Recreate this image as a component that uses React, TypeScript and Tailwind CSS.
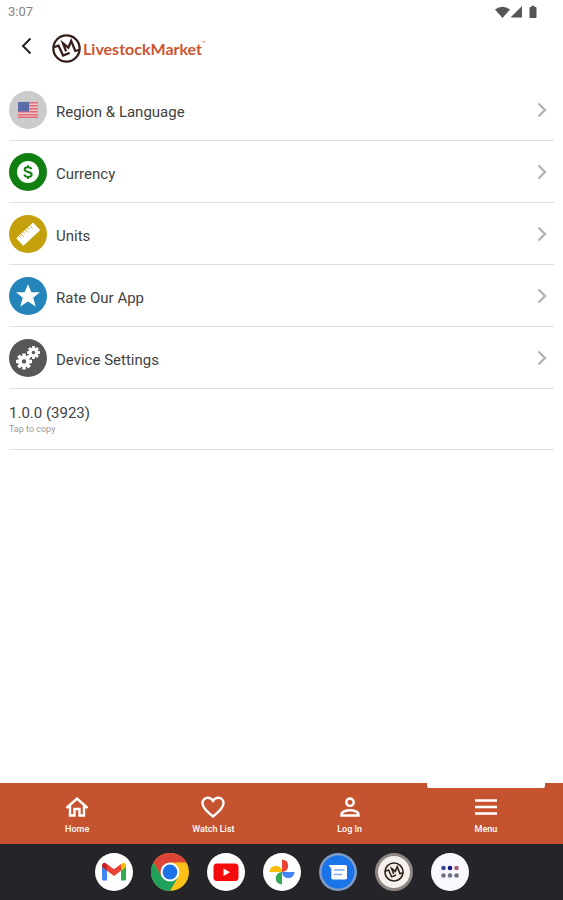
import type { ReactNode } from 'react';

interface SettingsRow {
  id: string;
  label: string;
  color: string;
  icon: ReactNode;
}

interface DockApp {
  id: string;
  label: string;
  icon: ReactNode;
}

function FlagIcon() {
  return (
    <svg viewBox="0 0 38 38" className="size-full" aria-hidden="true">
      <rect x="9" y="11" width="20" height="16" fill="#efc4c8" />
      {[11, 14, 17, 20, 23, 25.5].map((y) => (
        <rect key={y} x="9" y={y} width="20" height="1.5" fill="#de6d78" />
      ))}
      <rect x="9" y="11" width="11" height="9.5" fill="#5a6ca8" />
    </svg>
  );
}

function CoinIcon() {
  return (
    <svg viewBox="0 0 38 38" className="size-full" aria-hidden="true">
      <circle cx="19" cy="19" r="11" fill="#fff" />
      <path
        d="M22.6 16.2c-.5-1.3-1.8-2-3.6-2-2 0-3.4.9-3.4 2.3 0 3.4 7.1 1.5 7.1 5 0 1.5-1.5 2.4-3.6 2.4s-3.5-.9-3.9-2.3M19 12.2v2M19 24v2"
        fill="none"
        stroke="#118011"
        strokeWidth="1.9"
      />
    </svg>
  );
}

function RulerIcon() {
  return (
    <svg viewBox="0 0 38 38" className="size-full" aria-hidden="true">
      <g transform="rotate(-43 19 19)">
        <rect x="7.5" y="14" width="23" height="10.5" rx="0.8" fill="#fff" />
        <path d="M11 14v2.500M14 14v4M17 14v2.500M20 14v4M23 14v2.500M26 14v4" stroke="#c5a00d" strokeWidth="0.8" />
      </g>
    </svg>
  );
}

function StarIcon() {
  return (
    <svg viewBox="0 0 38 38" className="size-full" aria-hidden="true">
      <path d="M19 7.200l3.400 8h8.600l-6.800 5.600 2.500 8.600-7.700-4.900-7.700 4.900 2.500-8.600L7 15.200h8.600z" fill="#fff" />
    </svg>
  );
}

function Gear({ x, y, r }: { x: number; y: number; r: number }) {
  return (
    <g transform={`translate(${x} ${y})`}>
      {[0, 45, 90, 135].map((angle) => (
        <rect key={angle} x={-r * 0.22} y={-r} width={r * 0.44} height={r * 2} transform={`rotate(${angle})`} fill="#fff" />
      ))}
      <circle r={r * 0.75} fill="#fff" />
      <circle r={r * 0.27} fill="#575757" />
    </g>
  );
}

function GearsIcon() {
  return (
    <svg viewBox="0 0 38 38" className="size-full" aria-hidden="true">
      <Gear x={15} y={22.5} r={8} />
      <Gear x={24.5} y={13.5} r={6.4} />
    </svg>
  );
}

function BrandMark({ className }: { className: string }) {
  return (
    <svg viewBox="0 0 28 28" className={className} fill="none" stroke="currentColor" aria-hidden="true">
      <circle cx="14" cy="14" r="12.7" strokeWidth="2.2" />
      <path d="M1.500 12.800l4.800-1.600 4.400 9.600 6.300-2.600" strokeWidth="2.200" />
      <path d="M13.600 16.800L10.600 9l5.200 4.200 2.700-6.400 4 9.600 4.200-1.200" strokeWidth="2.200" />
    </svg>
  );
}

const ROWS: SettingsRow[] = [
  { id: 'region', label: 'Region & Language', color: 'bg-[#cbcbcb]', icon: <FlagIcon /> },
  { id: 'currency', label: 'Currency', color: 'bg-[#118011]', icon: <CoinIcon /> },
  { id: 'units', label: 'Units', color: 'bg-[#c5a00d]', icon: <RulerIcon /> },
  { id: 'rate', label: 'Rate Our App', color: 'bg-[#2385b9]', icon: <StarIcon /> },
  { id: 'device', label: 'Device Settings', color: 'bg-[#575757]', icon: <GearsIcon /> },
];

const TABS = [
  { id: 'home', label: 'Home', path: 'M1.500 13L12 3.500 22.500 13M5 11v9.500h4.500V14h5v6.500H19V11' },
  {
    id: 'watch',
    label: 'Watch List',
    path: 'M12 21.5C4.5 15.5 1.5 12 1.5 8.2c0-3.1 2.3-5.4 5.2-5.4 2.1 0 4.1 1.1 5.3 3 1.2-1.9 3.2-3 5.3-3 2.9 0 5.2 2.3 5.2 5.4 0 3.8-3 7.3-10.5 13.3z',
  },
  {
    id: 'login',
    label: 'Log In',
    path: 'M12 3.500a3.700 3.700 0 1 0 0 7.400 3.700 3.700 0 0 0 0-7.400zM3.500 20.500v-1c0-2.700 4.400-4.300 8.500-4.300s8.500 1.600 8.500 4.300v1z',
  },
  { id: 'menu', label: 'Menu', path: 'M1 5.500h22M1 12h22M1 18.500h22' },
];

const DOCK: DockApp[] = [
  {
    id: 'gmail',
    label: 'Gmail',
    icon: (
      <svg viewBox="0 0 38 38" className="size-full">
        <circle cx="19" cy="19" r="19" fill="#fff" />
        <path d="M7 13v13.2c0 .8.6 1.3 1.3 1.3H12V16.8z" fill="#4285f4" />
        <path d="M31 13v13.2c0 .8-.6 1.3-1.3 1.3H26V16.8z" fill="#34a853" />
        <path d="M26 11.6v6.2l5-3.8v-1.8c0-2.4-2.4-3.2-4-2z" fill="#fbbc04" />
        <path d="M12 11.6v6.2l-5-3.8v-1.8c0-2.4 2.4-3.2 4-2z" fill="#c5221f" />
        <path d="M12 17.8v-6.7l7 5.2 7-5.2v6.7l-7 5.2z" fill="#ea4335" />
      </svg>
    ),
  },
  {
    id: 'chrome',
    label: 'Chrome',
    icon: (
      <svg viewBox="0 0 38 38" className="size-full">
        <circle cx="19" cy="19" r="19" fill="#fbc116" />
        <path d="M2.5 9.5A19 19 0 0 1 35.5 9.5H19l-8.3 14.2z" fill="#db4437" />
        <path d="M2.5 9.5A19 19 0 0 0 19 38l8.2-14.2H10.8z" fill="#1fa15c" />
        <circle cx="19" cy="19" r="9.5" fill="#fff" />
        <circle cx="19" cy="19" r="7.4" fill="#1a73e8" />
      </svg>
    ),
  },
  {
    id: 'youtube',
    label: 'YouTube',
    icon: (
      <svg viewBox="0 0 38 38" className="size-full">
        <circle cx="19" cy="19" r="19" fill="#fff" />
        <rect x="6.5" y="10.5" width="25" height="17.5" rx="3.5" fill="#f40b0b" />
        <path d="M16.5 15.5v7.5l6.5-3.7z" fill="#fff" />
      </svg>
    ),
  },
  {
    id: 'photos',
    label: 'Photos',
    icon: (
      <svg viewBox="0 0 38 38" className="size-full">
        <circle cx="19" cy="19" r="19" fill="#fff" />
        <path d="M19 19V6.5a6.2 6.2 0 0 1 0 12.5z" fill="#ea4335" />
        <path d="M19 19h12.5a6.2 6.2 0 0 1-12.5 0z" fill="#4285f4" />
        <path d="M19 19v12.5a6.2 6.2 0 0 1 0-12.5z" fill="#34a853" />
        <path d="M19 19H6.5a6.2 6.2 0 0 1 12.5 0z" fill="#fbbc04" />
      </svg>
    ),
  },
  {
    id: 'messages',
    label: 'Messages',
    icon: (
      <svg viewBox="0 0 38 38" className="size-full">
        <circle cx="19" cy="19" r="19" fill="#7f9cc4" />
        <circle cx="19" cy="19" r="16.5" fill="#1a73e8" />
        <path d="M9.5 12h16.8c1 0 1.7.7 1.7 1.7v11c0 1-.7 1.7-1.7 1.7H14c-1 0-1.7-.7-1.7-1.7v-9z" fill="#fff" />
        <path d="M15 17h10.500M15 21.500h8" stroke="#7ba9ef" strokeWidth="1.4" />
      </svg>
    ),
  },
  {
    id: 'livestock',
    label: 'LivestockMarket',
    icon: (
      <span className="flex size-full items-center justify-center rounded-full border-3 border-[#8f8783] bg-[#f6f1ec]">
        <BrandMark className="size-5 text-[#30201c]" />
      </span>
    ),
  },
  {
    id: 'apps',
    label: 'All apps',
    icon: (
      <svg viewBox="0 0 38 38" className="size-full">
        <circle cx="19" cy="19" r="19" fill="#f8f8fe" />
        <circle cx="12.500" cy="15" r="2.300" fill="#3a4a8c" />
        <circle cx="19" cy="15" r="2.300" fill="#16168a" />
        <circle cx="25.500" cy="15" r="2.300" fill="#a5606f" />
        {[12.5, 19, 25.5].map((x) => (
          <circle key={x} cx={x} cy="22.500" r="2.300" fill="#6e7180" />
        ))}
      </svg>
    ),
  },
];

function StatusBar() {
  return (
    <div className="flex h-6 items-center justify-between pr-6 pl-2">
      <span className="text-[13px] text-[#858585]">3:07</span>
      <svg viewBox="0 0 44 14" className="h-3.5 w-11" fill="#555" aria-hidden="true">
        <path d="M0 4.500Q7.500-1 15 4.500L7.500 13z" />
        <path d="M27 1v11.500H15.500z" />
        <path d="M34.500 3q0-1 1-1h1V.8h3V2h1q1 0 1 1v9q0 1-1 1h-5q-1 0-1-1z" />
      </svg>
    </div>
  );
}

export default function App() {
  return (
    <div className="flex min-h-screen flex-col bg-white font-['Roboto',sans-serif]">
      <StatusBar />

      <header className="flex h-[55px] items-start pt-2.5 pl-[18px]">
        <button type="button" aria-label="Back" className="flex h-6 w-[34px] cursor-pointer items-center">
          <svg viewBox="0 0 18 18" className="size-[18px]" fill="none" stroke="#222" strokeWidth="2">
            <path d="M12.500 1.500L5 9l7.500 7.500" />
          </svg>
        </button>
        <a href="#home" className="flex items-center">
          <BrandMark className="size-[29px] text-[#351d1a]" />
          <span className="pl-0.5 font-['Lato',sans-serif] text-base font-bold text-[#cb5530]">LivestockMarket</span>
          <span className="self-start pt-1 text-[6px] text-[#cb5530]">™</span>
        </a>
      </header>

      <main className="flex-1 px-[9px]">
        <ul>
          {ROWS.map((row) => (
            <li key={row.id} className="border-b border-[#dedede]">
              <button type="button" className="flex h-[61px] w-full cursor-pointer items-center text-left">
                <span className={`size-[38px] rounded-full ${row.color}`}>{row.icon}</span>
                <span className="flex-1 pt-1 pl-[9px] text-[15px] leading-5 text-[#424242]">{row.label}</span>
                <svg viewBox="0 0 24 16" className="h-4 w-6" fill="none" stroke="#b4b4b4" strokeWidth="2.400">
                  <path d="M8.500 1.500L15 8l-6.500 6.500" />
                </svg>
              </button>
            </li>
          ))}
        </ul>
        <button
          type="button"
          className="flex h-[61px] w-full cursor-pointer flex-col justify-center border-b border-[#dedede] text-left"
        >
          <span className="text-[15px] leading-5 text-[#424242]">1.0.0 (3923)</span>
          <span className="text-[9px] leading-3 text-[#9a9a9a]">Tap to copy</span>
        </button>
      </main>

      <nav className="grid h-[61px] grid-cols-4 bg-[#c6532f] px-[9px]">
        {TABS.map((tab) => (
          <a key={tab.id} href={`#${tab.id}`} className="flex flex-col items-center text-white">
            <span className={`h-[5px] w-[118px] rounded-b-xs ${tab.id === 'menu' ? 'bg-white' : ''}`} />
            <svg viewBox="0 0 24 24" className="mt-[7px] size-6" fill="none" stroke="currentColor" strokeWidth="2.400">
              <path d={tab.path} />
            </svg>
            <span className="pt-1 text-[9px] leading-3 font-medium">{tab.label}</span>
          </a>
        ))}
      </nav>

      <footer className="flex h-14 items-center justify-center gap-[18px] bg-[#252429]">
        {DOCK.map((app) => (
          <button key={app.id} type="button" aria-label={app.label} className="size-[38px] cursor-pointer">
            {app.icon}
          </button>
        ))}
      </footer>
    </div>
  );
}
